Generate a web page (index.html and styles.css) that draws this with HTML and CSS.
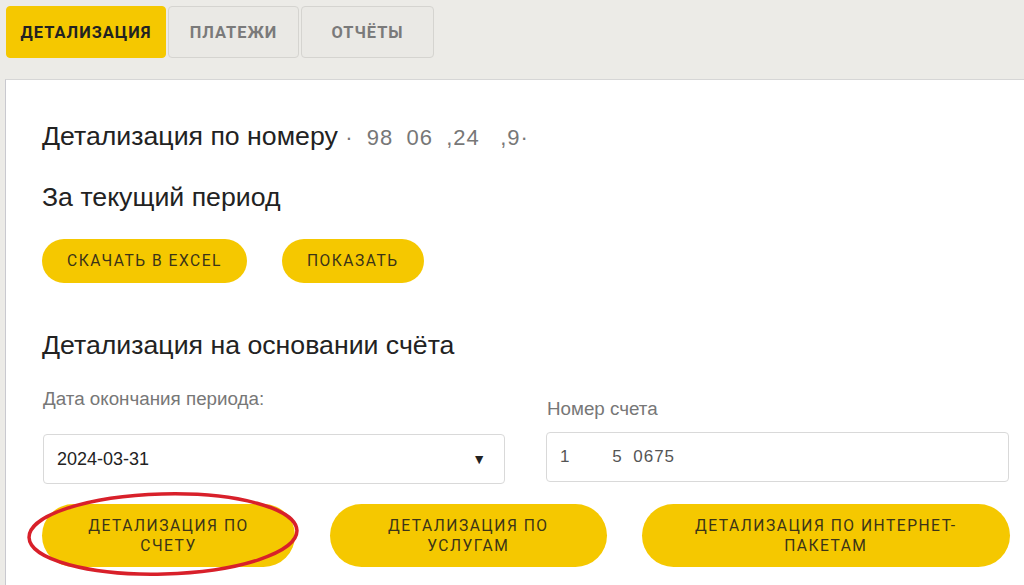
FILE: index.html
```html
<!DOCTYPE html>
<html lang="ru">
<head>
<meta charset="utf-8">
<link rel="stylesheet" href="styles.css">
</head>
<body>
<div class="page">
  <nav class="tabs">
    <div class="tab active">ДЕТАЛИЗАЦИЯ</div>
    <div class="tab">ПЛАТЕЖИ</div>
    <div class="tab">ОТЧЁТЫ</div>
  </nav>
  <main class="panel">
    <h2 class="title first">Детализация по номеру <span class="masked">·<span class="gap">9</span>98<span class="gap">9</span>06<span class="gap">0</span>,24 <span class="gap">9</span>,9·</span></h2>
    <h2 class="title">За текущий период</h2>
    <div class="btn-row">
      <button class="pill small">СКАЧАТЬ В EXCEL</button>
      <button class="pill small">ПОКАЗАТЬ</button>
    </div>
    <h2 class="title third">Детализация на основании счёта</h2>
    <div class="fields">
      <div class="field">
        <label class="label">Дата окончания периода:</label>
        <div class="control select"><span>2024-03-31</span><span class="arrow">&#9660;</span></div>
      </div>
      <div class="field right">
        <label class="label">Номер счета</label>
        <div class="control"><span class="masked small-mask">1<span class="gap">0001</span>5<span class="gap">0</span>0675</span></div>
      </div>
    </div>
    <div class="btn-row big">
      <div class="circled">
        <button class="pill large first-big">ДЕТАЛИЗАЦИЯ ПО<br>СЧЕТУ</button>
        <svg class="ellipse" width="276" height="88" viewBox="0 0 276 88"><ellipse cx="137" cy="43" rx="134" ry="40" fill="none" stroke="#d8202a" stroke-width="3.5" transform="rotate(-1.5 137 43)"/></svg>
      </div>
      <button class="pill large second-big">ДЕТАЛИЗАЦИЯ ПО<br>УСЛУГАМ</button>
      <button class="pill large third-big">ДЕТАЛИЗАЦИЯ ПО ИНТЕРНЕТ-<br>ПАКЕТАМ</button>
    </div>
  </main>
</div>
</body>
</html>
```
FILE: styles.css
```css
* { box-sizing: border-box; }
html, body { margin: 0; padding: 0; }
body {
  width: 1024px;
  height: 585px;
  overflow: hidden;
  background: #ecebe7;
  font-family: "Liberation Sans", Arial, sans-serif;
}
.page {
  display: flex;
  flex-direction: column;
  height: 585px;
}
.tabs {
  display: flex;
  gap: 2px;
  padding: 6px 0 0 6px;
  height: 79px;
}
.tab {
  height: 52px;
  padding: 0;
  display: flex;
  align-items: center;
  justify-content: center;
  font-family: Roboto, sans-serif;
  font-weight: 700;
  font-size: 16.4px;
  letter-spacing: 1px;
  color: #7a7a7a;
  background: #eae9e5;
  border: 1px solid #d5d4d0;
  border-radius: 4px;
}
.tab:nth-child(2) { width: 131px; }
.tab:nth-child(3) { width: 133px; }
.tab.active {
  width: 160px;
  background: #f5c800;
  border-color: #f5c800;
  color: #222;
}
.panel {
  flex: 1;
  margin-left: 5px;
  background: #fff;
  border-left: 1px solid #c9c9cf;
  border-top: 1px solid #d6d6d6;
  padding: 0 14px 0 36px;
}
.title {
  margin: 0;
  font-weight: 400;
  font-size: 26.7px;
  color: #222;
  line-height: 30px;
}
.title.first { margin-top: 41px; }
.title + .title { margin-top: 29px; }
.masked { color: #777; letter-spacing: 1px; font-size: 22px; }
.masked .gap { color: #fff; }
.btn-row {
  display: flex;
  gap: 35px;
  margin-top: 27px;
}
.pill {
  border: 0;
  background: #f5c800;
  font-family: Roboto, sans-serif;
  font-size: 15.6px;
  letter-spacing: 1.5px;
  color: #3b3418;
  border-radius: 32px;
  padding: 0;
}
.pill.small {
  height: 44px;
  padding: 0 25px;
}
.title.third { margin-top: 47px; }
.fields {
  display: flex;
  gap: 41px;
  margin-top: 28px;
}
.field {
  width: 463px;
  display: flex;
  flex-direction: column;
}
.field.right { padding-top: 10px; }
.label {
  font-size: 18.8px;
  color: #777;
  line-height: 22px;
  padding-left: 1px;
}
.control {
  margin-top: 12px;
  height: 50px;
  border: 1px solid #d9d9d9;
  border-radius: 4px;
  display: flex;
  align-items: center;
  justify-content: space-between;
  padding: 0 18px 0 13px;
  font-size: 18px;
  color: #222;
}
.field:first-child .control { margin-top: 24px; margin-left: 1px; width: 462px; }
.arrow { font-size: 14px; color: #222; }
.small-mask { font-size: 17px; color: #555; }
.btn-row.big { margin-top: 20px; }
.pill.large {
  height: 63px;
  line-height: 20px;
}
.circled { position: relative; width: 253px; height: 63px; }
.first-big { width: 253px; }
.second-big { width: 277px; }
.third-big { width: 369px; }
.ellipse {
  position: absolute;
  left: -16px;
  top: -13px;
  pointer-events: none;
}
```
